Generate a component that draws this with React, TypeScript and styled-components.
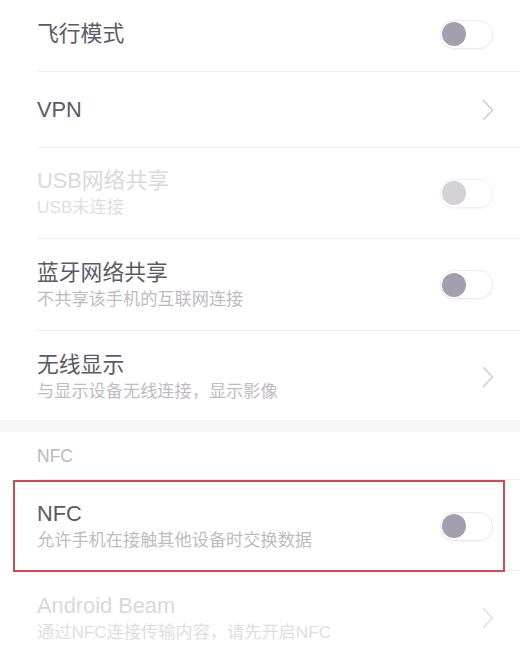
import React from "react";
import styled, { createGlobalStyle, css } from "styled-components";

const GlobalStyle = createGlobalStyle`
  html, body {
    margin: 0;
    padding: 0;
    background: #ffffff;
  }
  body {
    font-family: "Liberation Sans", "Noto Sans CJK SC", sans-serif;
    -webkit-font-smoothing: antialiased;
  }
`;

const Page = styled.div`
  width: 520px;
  height: 652px;
  overflow: hidden;
  background: #ffffff;
  display: flex;
  flex-direction: column;
`;

const Row = styled.div<{ $h: number; $highlight?: boolean }>`
  position: relative;
  flex: none;
  height: ${(p) => p.$h}px;
  padding-left: 37px;
  display: flex;
  ${(p) =>
    p.$highlight &&
    css`
      &::after {
        content: "";
        position: absolute;
        left: 13px;
        right: 15px;
        top: 0;
        bottom: -1px;
        border: 2.5px solid #d6474f;
        pointer-events: none;
      }
    `}
`;

const RowInner = styled.div<{ $divider?: boolean; $shift: number }>`
  flex: 1;
  display: flex;
  align-items: center;
  justify-content: space-between;
  padding-right: 27px;
  padding-top: ${(p) => Math.max(p.$shift, 0)}px;
  padding-bottom: ${(p) => Math.max(-p.$shift, 0)}px;
  border-bottom: ${(p) => (p.$divider ? "1px solid #efeef1" : "none")};
`;

const TextBlock = styled.div`
  display: flex;
  flex-direction: column;
`;

const Title = styled.div<{ $disabled?: boolean }>`
  font-size: 21.8px;
  line-height: 28px;
  color: ${(p) => (p.$disabled ? "#dad8dd" : "#5f5869")};
  white-space: nowrap;
`;

const Subtitle = styled.div<{ $disabled?: boolean }>`
  font-size: 17.2px;
  line-height: 24px;
  color: ${(p) => (p.$disabled ? "#e0dee3" : "#bfbac5")};
  white-space: nowrap;
`;

const Band = styled.div`
  flex: none;
  height: 12px;
  background: #f6f6f7;
`;

const SectionHeader = styled.div`
  flex: none;
  height: 48px;
  padding-left: 37px;
  display: flex;
`;

const HeaderInner = styled.div`
  flex: 1;
  display: flex;
  align-items: center;
  padding-top: 2px;
  font-size: 17.5px;
  color: #bcb8c0;
  border-bottom: 1px solid #efeef1;
`;

const Track = styled.div<{ $disabled?: boolean }>`
  width: 50px;
  height: 27px;
  border-radius: 14px;
  background: #ffffff;
  border: 1px solid ${(p) => (p.$disabled ? "#f2f1f3" : "#ebeaed")};
  box-shadow: 0 1px 2px rgba(0, 0, 0, 0.04);
  display: flex;
  align-items: center;
  padding-left: 1.5px;
  flex: none;
`;

const Knob = styled.div<{ $disabled?: boolean }>`
  width: 24px;
  height: 24px;
  border-radius: 50%;
  background: ${(p) => (p.$disabled ? "#d3d1d6" : "#a59fad")};
`;

const ChevronBox = styled.div`
  width: 12px;
  height: 22px;
  margin-right: -1px;
  display: flex;
  flex: none;
`;

const Toggle = ({ disabled }: { disabled?: boolean }) => (
  <Track $disabled={disabled}>
    <Knob $disabled={disabled} />
  </Track>
);

const Chevron = ({ disabled }: { disabled?: boolean }) => (
  <ChevronBox>
    <svg width="12" height="22" viewBox="0 0 12 22">
      <path
        d="M1.5 1.5 L10.5 11 L1.5 20.5"
        fill="none"
        stroke={disabled ? "#dedde0" : "#c9c7cc"}
        strokeWidth="1.3"
        strokeLinecap="round"
        strokeLinejoin="round"
      />
    </svg>
  </ChevronBox>
);

type Item = {
  title: string;
  sub?: string;
  control: "toggle" | "chevron";
  disabled?: boolean;
  h: number;
  shift?: number;
  divider?: boolean;
  highlight?: boolean;
};

const SettingRow = ({ item }: { item: Item }) => (
  <Row $h={item.h} $highlight={item.highlight}>
    <RowInner $divider={item.divider} $shift={item.shift ?? 0}>
      <TextBlock>
        <Title $disabled={item.disabled}>{item.title}</Title>
        {item.sub && <Subtitle $disabled={item.disabled}>{item.sub}</Subtitle>}
      </TextBlock>
      {item.control === "toggle" ? (
        <Toggle disabled={item.disabled} />
      ) : (
        <Chevron disabled={item.disabled} />
      )}
    </RowInner>
  </Row>
);

const topItems: Item[] = [
  { title: "飞行模式", control: "toggle", h: 72, shift: -3, divider: true },
  { title: "VPN", control: "chevron", h: 76, divider: true },
  { title: "USB网络共享", sub: "USB未连接", control: "toggle", disabled: true, h: 91, divider: true },
  { title: "蓝牙网络共享", sub: "不共享该手机的互联网连接", control: "toggle", h: 92, divider: true },
  { title: "无线显示", sub: "与显示设备无线连接，显示影像", control: "chevron", h: 89, shift: 2 },
];

const nfcItems: Item[] = [
  { title: "NFC", sub: "允许手机在接触其他设备时交换数据", control: "toggle", h: 91, shift: 2, divider: true, highlight: true },
  { title: "Android Beam", sub: "通过NFC连接传输内容，请先开启NFC", control: "chevron", disabled: true, h: 90, shift: 4 },
];

export default function App() {
  return (
    <>
      <GlobalStyle />
      <Page>
        {topItems.map((it) => (
          <SettingRow key={it.title} item={it} />
        ))}
        <Band />
        <SectionHeader>
          <HeaderInner>NFC</HeaderInner>
        </SectionHeader>
        {nfcItems.map((it) => (
          <SettingRow key={it.title} item={it} />
        ))}
      </Page>
    </>
  );
}
